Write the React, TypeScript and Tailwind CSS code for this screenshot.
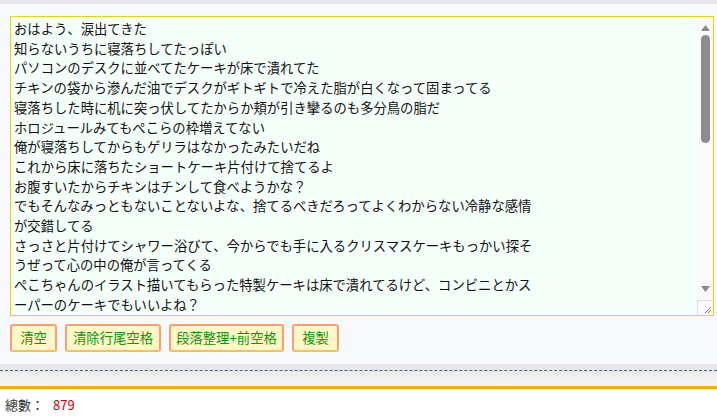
import React from "react";

const lines = [
  "おはよう、涙出てきた",
  "知らないうちに寝落ちしてたっぽい",
  "パソコンのデスクに並べてたケーキが床で潰れてた",
  "チキンの袋から滲んだ油でデスクがギトギトで冷えた脂が白くなって固まってる",
  "寝落ちした時に机に突っ伏してたからか頬が引き攣るのも多分鳥の脂だ",
  "ホロジュールみてもぺこらの枠増えてない",
  "俺が寝落ちしてからもゲリラはなかったみたいだね",
  "これから床に落ちたショートケーキ片付けて捨てるよ",
  "お腹すいたからチキンはチンして食べようかな？",
  "でもそんなみっともないことないよな、捨てるべきだろってよくわからない冷静な感情",
  "が交錯してる",
  "さっさと片付けてシャワー浴びて、今からでも手に入るクリスマスケーキもっかい探そ",
  "うぜって心の中の俺が言ってくる",
  "ぺこちゃんのイラスト描いてもらった特製ケーキは床で潰れてるけど、コンビニとかス",
  "ーパーのケーキでもいいよね？",
];

const buttons = [
  { label: "清空", w: "w-[47px]" },
  { label: "清除行尾空格", w: "w-[96px]" },
  { label: "段落整理+前空格", w: "w-[115px]" },
  { label: "複製", w: "w-[47px]" },
];

function Scrollbar() {
  return (
    <div className="flex w-[16px] flex-col items-center bg-[#fafafa]">
      <div className="flex h-[17px] w-full items-end justify-center pb-[3px]">
        <svg width="9" height="6" viewBox="0 0 9 6">
          <path d="M4.5 0 L9 6 L0 6 Z" fill="#8a8a8a" />
        </svg>
      </div>
      <div className="mt-[1px] h-[108px] w-[9px] rounded-full bg-[#8c8c8c]" />
      <div className="flex-1" />
      <div className="flex h-[14px] w-full items-start justify-center">
        <svg width="9" height="6" viewBox="0 0 9 6">
          <path d="M0 0 L9 0 L4.5 6 Z" fill="#8a8a8a" />
        </svg>
      </div>
      <div className="flex h-[15px] w-full items-end justify-end border-l border-t border-[#dcdcdc] bg-[#fafafa] p-[1px]">
        <svg width="10" height="10" viewBox="0 0 10 10">
          <path d="M9 3 L3 9 M9 6 L6 9" stroke="#777" strokeWidth="1" />
        </svg>
      </div>
    </div>
  );
}

export default function App() {
  return (
    <div
      className="flex h-[416px] w-[717px] flex-col overflow-hidden bg-white"
      style={{ fontFamily: '"Noto Sans CJK JP", "Noto Sans", sans-serif' }}
    >
      <div className="h-[4px] bg-[#e8e8e8]" />
      <div className="flex flex-col bg-[#f8f9fd] pl-[10px] pr-[3px] pt-[12px] pb-[12px]">
        <div className="flex h-[300px] border border-[#e5d800] bg-[#f5fffa]">
          <div className="flex-1 overflow-hidden px-[3px] pt-[2px] text-[13.33px] leading-[19.7px] text-[#111]">
            {lines.map((l, i) => (
              <div key={i} className="whitespace-pre">
                {l}
              </div>
            ))}
          </div>
          <Scrollbar />
        </div>
        <div className="mt-[8px] flex gap-[8px]">
          {buttons.map((b) => (
            <button
              key={b.label}
              className={`${b.w} flex h-[28px] items-center justify-center rounded-[3px] border-2 border-[#ff9d6c] border-b-[#ffbf4d] bg-[#fff7c6] text-[13.33px] text-[#089808]`}
            >
              {b.label}
            </button>
          ))}
        </div>
      </div>
      <div className="h-[22px] bg-gradient-to-b from-[#e4e4e4] to-[#f6f6f6] pt-[6px]">
        <div className="border-t border-dashed border-[#4b5e96]" />
      </div>
      <div className="h-[3px] bg-[#f6ad00]" />
      <div className="flex items-center pl-[5px] pt-[6px] text-[13px]">
        <span className="text-[#333]">總數：</span>
        <span className="ml-[9px] text-[#d00000]">879</span>
      </div>
    </div>
  );
}
